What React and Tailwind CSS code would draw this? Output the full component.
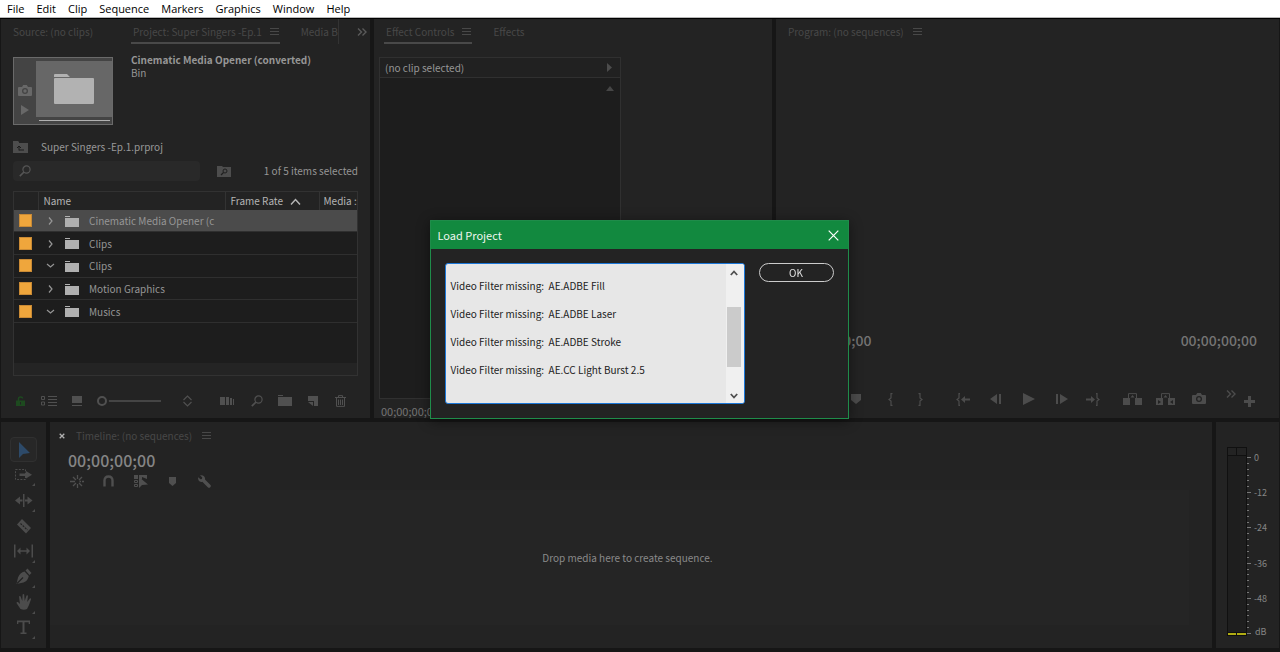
import React from "react";

function Svg({ w, h, children, className = "" }) {
  return (
    <svg width={w} height={h} viewBox={`0 0 ${w} ${h}`} fill="currentColor" aria-hidden="true" className={`block shrink-0 ${className}`}>
      {children}
    </svg>
  );
}

const line = { fill: "none", stroke: "currentColor" };

const MenuLines = () => (
  <Svg w={9} h={8}>
    <path d="M0 0h9v1H0zM0 3h9v1H0zM0 6h9v1H0z" />
  </Svg>
);

const DoubleChevron = () => (
  <Svg w={11} h={8}>
    <path d="M1 .5 4.5 4 1 7.5M5.5.5 9 4 5.500 7.5" {...line} strokeWidth="1.4" />
  </Svg>
);

const Camera = ({ hole = "#232323" }) => (
  <Svg w={14} h={12}>
    <path d="M1 2h3l1.200-2h3.600L10 2h3q1 0 1 1v7q0 1-1 1H1q-1 0-1-1V3q0-1 1-1z" />
    <circle cx="7" cy="6" r="3" fill={hole} />
    <circle cx="7" cy="6" r="1.700" />
  </Svg>
);

const Folder = () => (
  <Svg w={14} h={11}>
    <path d="M0 0h5v1H0zM0 2h14v9H0z" />
  </Svg>
);

const FolderUp = () => (
  <Svg w={15} h={12}>
    <path d="M0 0h5l1 1v1H0zM0 2h15v10H0z" />
    <path d="M6 9.500V5.500M4 7l2-2 2 2M6 9h5" fill="none" stroke="#1c1c1c" />
  </Svg>
);

const FolderSearch = () => (
  <Svg w={14} h={11}>
    <path d="M0 0h5l1 1h8v10H0z" />
    <circle cx="8" cy="5" r="2" fill="none" stroke="#1f1f1f" />
    <path d="M6.500 6.500 4 9" stroke="#1f1f1f" strokeWidth="1.200" />
  </Svg>
);

const Magnifier = () => (
  <Svg w={12} h={12}>
    <circle cx="7.500" cy="4.500" r="3.600" {...line} strokeWidth="1.200" />
    <path d="M5 7 .8 11.200" {...line} strokeWidth="1.700" />
  </Svg>
);

const Caret = ({ open }) => (
  <Svg w={9} h={8}>
    <path d={open ? "M1 2 4.500 5 8 2" : "M3 .5 6 4 3 7.500"} {...line} strokeWidth="1.200" />
  </Svg>
);

const SmallCorner = () => (
  <Svg w={3} h={3} className="absolute bottom-px right-[2px]">
    <path d="M3 0v3H0z" />
  </Svg>
);

function Tab({ label, active }) {
  return (
    <div className={`flex h-[25px] items-center gap-2 border-b-2 pl-[2px] pr-px pt-[3px] ${active ? "border-[#494949]" : "border-transparent"}`}>
      <button type="button" className="whitespace-nowrap">{label}</button>
      {active && (
        <button type="button" aria-label={`${label} panel menu`}>
          <MenuLines />
        </button>
      )}
    </div>
  );
}

const menus = ["File", "Edit", "Clip", "Sequence", "Markers", "Graphics", "Window", "Help"];

const bins = [
  { name: "Cinematic Media Opener (c", open: false, selected: true },
  { name: "Clips", open: false },
  { name: "Clips", open: true },
  { name: "Motion Graphics", open: false },
  { name: "Musics", open: true },
];

function IconButton({ label, className = "", children }) {
  return (
    <button type="button" aria-label={label} className={`flex shrink-0 items-center justify-center ${className}`}>
      {children}
    </button>
  );
}

function ProjectPanel() {
  return (
    <section className="flex min-w-0 flex-col bg-[#232323] px-3">
      <div className="flex text-[#484848]">
        <div className="-ml-[2px] mr-[37px]"><Tab label="Source: (no clips)" /></div>
        <Tab label="Project: Super Singers -Ep.1" active />
        <div className="ml-[19px] w-10 overflow-hidden border-r border-[#333333]"><Tab label="Media B" /></div>
        <IconButton label="More panels" className="-mr-[10px] ml-auto text-[#5a5a5a]"><DoubleChevron /></IconButton>
      </div>

      <div className="mt-[13px] flex gap-[18px]">
        <div className="flex h-[68px] w-[100px] border border-[#6a6a6a] bg-[#444444]">
          <div className="flex w-[22px] flex-col items-center justify-end gap-2 pb-[9px] text-[#686868]">
            <Camera hole="#444444" />
            <Svg w={10} h={10}><path d="M1 0v10l8-5z" /></Svg>
          </div>
          <div className="flex flex-1 flex-col pt-[3px]">
            <div className="flex h-14 items-center justify-center bg-[#676767] text-[#b2b2b2]">
              <Svg w={40} h={30}>
                <path d="M0 3V1q0-1 1-1h12l3 3zM1 4h38q1 0 1 1v24q0 1-1 1H1q-1 0-1-1V5q0-1 1-1z" />
              </Svg>
            </div>
            <div className="ml-[3px] mr-[2px] mt-[3px] h-px bg-[#b0b0b0]" />
          </div>
        </div>
        <div className="-mt-1 leading-[13px] text-[#969696]">
          <h2 className="font-bold">Cinematic Media Opener (converted)</h2>
          <p>Bin</p>
        </div>
      </div>

      <div className="mt-3 flex h-5 items-center gap-[13px] text-[#999999]">
        <span className="text-[#4d4d4d]"><FolderUp /></span>
        <span>Super Singers -Ep.1.prproj</span>
      </div>

      <div className="mt-1 flex h-5 items-center">
        <label className="flex h-5 w-[187px] items-center rounded-sm bg-[#292929] pl-[6px] text-[#555555]">
          <Magnifier />
          <input type="text" aria-label="Search project" className="ml-1 min-w-0 flex-1 bg-transparent outline-none" />
        </label>
        <IconButton label="Create search bin" className="ml-[17px] text-[#4d4d4d]"><FolderSearch /></IconButton>
        <span className="ml-auto whitespace-nowrap text-[#969696]">1 of 5 items selected</span>
      </div>

      <div className="mt-[10px] flex flex-1 flex-col border border-[#323232] bg-[#1d1d1d]">
        <table className="h-[131px] w-full table-fixed border-collapse text-left text-[#969696]">
          <colgroup>
            <col className="w-6" />
            <col />
            <col className="w-[94px]" />
            <col className="w-[38px]" />
          </colgroup>
          <thead>
            <tr className="h-[18px] bg-[#232323] text-[#b4b4b4]">
              <th aria-label="Label" className="p-0" />
              <th className="border-l border-[#333333] p-0 pl-[5px] font-normal">Name</th>
              <th className="border-l border-[#333333] p-0 pl-[5px] font-normal">
                <span className="flex items-center gap-[7px] whitespace-nowrap">
                  Frame Rate
                  <Svg w={11} h={7}><path d="M1 6.500 5.500 1.500 10 6.500" {...line} strokeWidth="1.500" /></Svg>
                </span>
              </th>
              <th className="overflow-hidden whitespace-nowrap border-l border-[#333333] p-0 pl-1 font-normal">Media :</th>
            </tr>
          </thead>
          <tbody>
            {bins.map((b, i) => (
              <tr key={i} className={`border-b border-[#2f2f2f] ${b.selected ? "bg-[#4b4b4b]" : ""}`}>
                <td className="p-0 pl-[5px]">
                  <span className="block h-[13px] w-[13px] border border-[#c98a35] bg-[#efa63c]" />
                </td>
                <td colSpan={3} className="p-0 pl-2">
                  <span className="flex items-center pt-px">
                    <IconButton label={b.open ? "Collapse bin" : "Expand bin"}><Caret open={b.open} /></IconButton>
                    <span className="ml-[10px] text-[#b0b0b0]"><Folder /></span>
                    <span className="ml-[10px]">{b.name}</span>
                  </span>
                </td>
              </tr>
            ))}
          </tbody>
        </table>
        <div className="mt-auto h-3 bg-[#242424]" />
      </div>

      <div className="flex h-[42px] items-center pb-px pt-[8px] text-[#505050]">
        <IconButton label="Project writable" className="ml-[3px] text-[#1d4a1f]">
          <Svg w={10} h={10}>
            <path d="M0 4.500h9V10H0z" />
            <path d="M2.500 5V3q0-2 2-2t2.200 1.500" {...line} strokeWidth="1.400" />
            <path d="M4 6h1v2.500H4z" fill="#232323" />
          </Svg>
        </IconButton>
        <IconButton label="List view" className="ml-[15px]">
          <Svg w={16} h={11}>
            <path d="M.5 1.500h3v3h-3zM.5 7h3v3h-3z" {...line} />
            <path d="M7 1h9v1H7zM7 4h9v1H7zM7 7h9v1H7zM7 10h9v1H7z" />
          </Svg>
        </IconButton>
        <IconButton label="Icon view" className="ml-[15px]">
          <Svg w={10} h={10}><path d="M0 0h10v7H0zM0 9h10v1H0z" /></Svg>
        </IconButton>
        <input
          type="range"
          aria-label="Icon size"
          defaultValue="0"
          className="ml-[15px] h-3 w-16 appearance-none bg-transparent [&::-webkit-slider-runnable-track]:h-[2px] [&::-webkit-slider-runnable-track]:bg-[#454545] [&::-webkit-slider-thumb]:-mt-1 [&::-webkit-slider-thumb]:h-[10px] [&::-webkit-slider-thumb]:w-[10px] [&::-webkit-slider-thumb]:appearance-none [&::-webkit-slider-thumb]:rounded-full [&::-webkit-slider-thumb]:border-2 [&::-webkit-slider-thumb]:border-[#505050] [&::-webkit-slider-thumb]:bg-[#232323] [&::-webkit-slider-thumb]:shadow-[0_0_0_2px_#232323]"
        />
        <IconButton label="Sort icons" className="ml-[22px]">
          <Svg w={9} h={12}><path d="M.5 5 4.500 1l4 4M.5 7l4 4 4-4" {...line} strokeWidth="1.200" /></Svg>
        </IconButton>
        <IconButton label="Automate to sequence" className="ml-auto">
          <Svg w={15} h={8}><path d="M0 0h5v8H0zM6 0h3v8H6zM10 1h2v7h-2zM13 2h1v6h-1z" /></Svg>
        </IconButton>
        <IconButton label="Find" className="ml-4"><Magnifier /></IconButton>
        <IconButton label="New bin" className="ml-[15px]"><Folder /></IconButton>
        <IconButton label="New item" className="ml-4">
          <Svg w={10} h={10}><path d="M0 0h10v10H6V5H0zM0 6l5 4V6z" /></Svg>
        </IconButton>
        <IconButton label="Clear" className="ml-[17px] mr-3">
          <Svg w={11} h={12}>
            <path d="M0 2.500h11M3.500 2V.6h4V2M1.500 3v8.400h8V3M3.500 4.500V10M5.500 4.500V10M7.500 4.500V10" {...line} />
          </Svg>
        </IconButton>
      </div>
    </section>
  );
}

function EffectsPanel() {
  return (
    <section className="flex min-w-0 flex-col bg-[#232323] pl-[5px]">
      <div className="flex gap-[19px] pl-[5px] text-[#484848]">
        <Tab label="Effect Controls" active />
        <Tab label="Effects" />
      </div>
      <div className="mt-[13px] flex w-[242px] flex-1 flex-col border border-[#303030] bg-[#1d1d1d]">
        <div className="flex h-5 items-center justify-between border-b border-[#303030] bg-[#212121] pl-[5px] pr-2 text-[#969696]">
          <span>(no clip selected)</span>
          <Svg w={5} h={9} className="text-[#4c4c4c]"><path d="M0 0v9l5-4.500z" /></Svg>
        </div>
        <IconButton label="Scroll up" className="mr-[6px] mt-2 self-end text-[#464646]">
          <Svg w={8} h={5}><path d="M0 5h8L4 0z" /></Svg>
        </IconButton>
      </div>
      <div className="flex h-[19px] items-center pl-[2px] pt-1 text-[11px] text-[#747474]">00;00;00;00</div>
    </section>
  );
}

const Monitor = ({ arrows }) => (
  <Svg w={19} h={12}>
    <path d="M0 5h7v7H0zM12 5h7v7h-7z" />
    <path d="M5.500 5V.6h8V5" {...line} />
    <path d="M7.500 4.500 9.500 2l2 2.500z" />
    {arrows && <path d="M2 7v4l3-2zM17 7v4l-3-2z" fill="#232323" />}
  </Svg>
);

const Brace = ({ flip }) => (
  <Svg w={5} h={13}>
    <path d={flip ? "M.5.6h1.500v4.400L4 6.500 2 8v4.400H.5" : "M4.500.6H3v4.400L1 6.500 3 8v4.400h1.500"} {...line} strokeWidth="1.200" />
  </Svg>
);

function ProgramPanel() {
  const codes = "text-sm font-medium leading-4 text-[#747474]";
  return (
    <section className="flex min-w-0 flex-col justify-between bg-[#232323]">
      <div className="flex pl-[10px] text-[#484848]">
        <Tab label="Program: (no sequences)" />
        <button type="button" aria-label="Program panel menu" className="ml-2 pt-px"><MenuLines /></button>
      </div>
      <div>
        <div className="flex justify-between pl-[19px] pr-[22px]">
          <span className={codes}>00;00;00;00</span>
          <span className={codes}>00;00;00;00</span>
        </div>
        <div className="mb-1 mt-9 flex h-[30px] items-center justify-end pr-[22px] text-[#4c4c4c]">
          <IconButton label="Add marker" className="mr-1 w-[30px]">
            <Svg w={10} h={10}><path d="M0 0h10v6L5 10 0 6z" /></Svg>
          </IconButton>
          <IconButton label="Mark in" className="w-[30px]"><Brace /></IconButton>
          <IconButton label="Mark out" className="mr-[11px] w-[30px]"><Brace flip /></IconButton>
          <IconButton label="Go to in" className="w-[33px]">
            <Svg w={14} h={13}>
              <path d="M4 .6H3v4.400L1 6.500 3 8v4.400h1" {...line} strokeWidth="1.200" />
              <path d="M5 6.500 9 3v2.500h5v2H9V10z" />
            </Svg>
          </IconButton>
          <IconButton label="Step back" className="w-[33px]">
            <Svg w={12} h={10}><path d="M7 0v10L0 5zM9 0h2v10H9z" /></Svg>
          </IconButton>
          <IconButton label="Play" className="w-[33px]">
            <Svg w={12} h={12}><path d="M0 0v12l12-6z" /></Svg>
          </IconButton>
          <IconButton label="Step forward" className="w-[33px]">
            <Svg w={12} h={10}><path d="M0 0h2v10H0zM4 0v10l8-5z" /></Svg>
          </IconButton>
          <IconButton label="Go to out" className="mr-[5px] w-[33px] pr-1">
            <Svg w={14} h={13}>
              <path d="M10 .6h1v4.400l2 1.500L11 8v4.400h-1" {...line} strokeWidth="1.200" />
              <path d="M9 6.500 5 3v2.500H0v2h5V10z" />
            </Svg>
          </IconButton>
          <IconButton label="Lift" className="w-[33px]"><Monitor /></IconButton>
          <IconButton label="Extract" className="w-[33px]"><Monitor arrows /></IconButton>
          <IconButton label="Export frame" className="w-[33px]"><Camera /></IconButton>
          <IconButton label="More buttons" className="ml-2 w-4 pb-[10px]"><DoubleChevron /></IconButton>
          <IconButton label="Button editor" className="ml-[2px] w-4 pt-1">
            <Svg w={11} h={11}><path d="M4 0h3v4h4v3H7v4H4V7H0V4h4z" /></Svg>
          </IconButton>
        </div>
      </div>
    </section>
  );
}

const tools = [
  { name: "Selection tool", art: <path d="M5 2v16l4-4 7-1z" />, selected: true },
  {
    name: "Track select forward tool",
    sub: true,
    art: (
      <>
        <path d="M1.500 4.500h10v10h-10z" {...line} strokeDasharray="2 1.300" />
        <path d="M5.500 8.500H12V6l6 3.800-6 3.700V11H5.500z" />
      </>
    ),
  },
  { name: "Ripple edit tool", sub: true, art: <path d="M9 4h1.500v13H9zM1 10.500 6 6.500v3h2.500v2H6v3zM18.500 10.500l-5-4v3H11v2h2.500v3z" /> },
  {
    name: "Razor tool",
    art: (
      <>
        <path d="M8 3 17 12l-5 5.500L3 8.500z" />
        <path d="M6.500 7.500 13.500 14" stroke="#232323" strokeWidth="1.200" strokeDasharray="2 1" />
      </>
    ),
  },
  { name: "Slip tool", sub: true, art: <path d="M0 3.500h1.500v13H0zM17.500 3.500H19v13h-1.500zM3 10l3.500-3.500v2.800h6V6.500L16 10l-3.500 3.500v-2.800h-6v2.800z" /> },
  {
    name: "Pen tool",
    sub: true,
    art: (
      <>
        <path d="M11.500 3.500 13.500 1.500 17.500 6 15.500 8zM10.500 4.500 14.800 9q-1 5-5.300 6.500L2.500 17 4 10.500q2-5 6.500-6z" />
        <path d="M3 16.500 9 10.500" stroke="#232323" strokeWidth="1.200" />
      </>
    ),
  },
  {
    name: "Hand tool",
    sub: true,
    art: (
      <path d="M6.500 17 2.500 11q0-1.200 1.400-1L6 12 5 4.500q.8-1.200 1.600 0L8.300 9 8.600 2.500q.8-1 1.600 0L10.700 9l1.800-5.500q1-.8 1.500.3L13.200 10l2.600-3.500q1-.5 1.300.5L15 13l-2 4q-3 1.500-6.500 0z" />
    ),
  },
  { name: "Type tool", sub: true, art: <path d="M3 3.500h13V7h-1.300V5.300h-4.200v10.200h2V17H6.500v-1.500h2V5.300H4.300V7H3z" /> },
];

function Tools() {
  return (
    <nav aria-label="Tools" className="flex flex-col items-center justify-between bg-[#232323] pb-2 pt-[15px] text-[#4c4c4c]">
      {tools.map((t) => (
        <IconButton
          key={t.name}
          label={t.name}
          className={`relative h-[25px] w-[27px] ${t.selected ? "rounded-sm border border-[#303030] bg-[#272727] text-[#2d4a69]" : ""}`}
        >
          <Svg w={20} h={20}>{t.art}</Svg>
          {t.sub && <SmallCorner />}
        </IconButton>
      ))}
    </nav>
  );
}

function Timeline() {
  return (
    <section className="flex min-w-0 flex-col bg-[#232323]">
      <div className="flex h-[26px] items-center pl-[9px] pt-[2px] text-[#484848]">
        <IconButton label="Close timeline" className="text-[#b0b0b0]">
          <Svg w={6} h={6}><path d="m.7.7 4.600 4.600M5.300.7.7 5.300" {...line} strokeWidth="1.300" /></Svg>
        </IconButton>
        <span className="ml-[11px]">Timeline: (no sequences)</span>
        <IconButton label="Timeline panel menu" className="ml-[10px]"><MenuLines /></IconButton>
      </div>
      <div className="flex h-6 items-center pl-[18px] text-base font-medium text-[#858585]">00;00;00;00</div>
      <div className="flex h-[18px] items-center pl-5 text-[#4f4f4f]">
        <IconButton label="Insert as nests">
          <Svg w={14} h={13}>
            <path d="M7.500 0v4M7.500 9v4M0 6.500h5M9.500 6.500h1.500M12 6.500h2M3 2l3 3M3 11l3-3M12 2 9 5M9 8l3 3" {...line} strokeWidth="1.300" />
          </Svg>
        </IconButton>
        <IconButton label="Snap" className="ml-[19px]">
          <Svg w={11} h={12}><path d="M1.500 11.500V5.500q0-4 4-4t4 4V11.500" {...line} strokeWidth="2.400" /></Svg>
        </IconButton>
        <IconButton label="Linked selection" className="ml-5">
          <Svg w={14} h={13}>
            <path d="M0 0h4v4H0zM5 0h8v4L8 2v2H5z" />
            <path d="M.5 5.500h3v2h-3zM.5 9.500h3v2h-3z" {...line} />
            <path d="M5 2v11l3-3 6-.5z" />
          </Svg>
        </IconButton>
        <IconButton label="Add marker" className="ml-[21px]">
          <Svg w={7} h={9}><path d="M0 0h7v6L3.500 9 0 6z" /></Svg>
        </IconButton>
        <IconButton label="Timeline settings" className="ml-[22px]">
          <Svg w={13} h={13}>
            <path d="M2 .3 4.300 2.600 3.800 4 2.500 4.300.2 2.200q-.6 3 1.500 4.300 1.300.7 2.600.2L10 12.500q1.300.8 2.300-.3t.2-2.200L7 4.600q.4-2-1-3.400T2 .3z" />
          </Svg>
        </IconButton>
      </div>
      <div className="mr-[23px] flex flex-1 items-center justify-center bg-[#252525] pl-4 text-[#8a8a8a]">
        Drop media here to create sequence.
      </div>
      <div className="h-[23px]" />
    </section>
  );
}

const ticks = Array.from({ length: 31 }, (_, i) => i);
const levels = ["0", "-12", "-24", "-36", "-48", "dB"];

function Meter() {
  return (
    <section aria-label="Audio meters" className="bg-[#232323] pl-[11px] pt-[25px]">
      <svg width="48" height="192" viewBox="0 0 48 192" className="block">
        <path d="M0 0h20v189H0z" fill="#101010" />
        <path d="M1 1h8v7H1zM10 1h9v7h-9z" fill="#232323" />
        <path d="M1 9h18v176H1z" fill="#1e1e1e" />
        <path d="M1 186h8v2H1zM10 186h9v2h-9z" fill="#b0ac13" />
        {ticks.map((i) => (
          <path key={i} d={`M20 ${Math.round(10 + i * 5.87)}h${i % 6 === 0 ? 4 : 2}v1h-${i % 6 === 0 ? 4 : 2}z`} fill="#777777" />
        ))}
        {levels.map((t, i) => (
          <text key={t} x={t === "dB" ? 28 : 27} y={i === 5 ? 188 : Math.round(14 + i * 35.2)} fontSize="9" fill="#858585">{t}</text>
        ))}
      </svg>
    </section>
  );
}

const messages = ["Fill", "Laser", "Stroke"]
  .map((n) => `Video Filter missing:  AE.ADBE ${n}`)
  .concat("Video Filter missing:  AE.CC Light Burst 2.5")
  .join("\n");

function LoadProjectDialog() {
  return (
    <div className="fixed inset-0 flex items-center justify-center pb-[13px] pr-[2px]">
      <div role="dialog" aria-modal="true" aria-labelledby="dlg" className="w-[419px] border border-[#1f8c4a] bg-[#232323] shadow-[0_2px_12px_rgba(0,0,0,0.45)]">
        <div className="flex h-7 items-center justify-between bg-[#12893f] pl-[7px] pr-[9px]">
          <h1 id="dlg" className="text-[11px] text-[#eef6f0]">Load Project</h1>
          <IconButton label="Close" className="text-white">
            <Svg w={11} h={11}><path d="m.7.7 9.600 9.600M10.300.7.7 10.300" {...line} strokeWidth="1.200" /></Svg>
          </IconButton>
        </div>
        <div className="flex items-start gap-[14px] px-[14px] pb-[14px] pt-[14px]">
          <div className="flex h-[141px] w-[300px] overflow-hidden rounded-[3px] border border-[#1b77d8] bg-[#e7e7e7]">
            <textarea
              readOnly
              aria-label="Load messages"
              value={messages}
              className="block min-w-0 flex-1 resize-none overflow-hidden bg-transparent pl-[5px] pt-2 leading-7 text-[#222222] outline-none"
            />
            <div className="flex w-[18px] flex-col items-center bg-[#f0f0f0] pb-1 pr-[2px] pt-[6px] text-[#505050]">
              <IconButton label="Scroll up"><Svg w={8} h={6}><path d="M.8 5 4 1.500 7.200 5" {...line} strokeWidth="1.800" /></Svg></IconButton>
              <div className="mt-[31px] h-[60px] w-[14px] bg-[#cbcbcb]" />
              <IconButton label="Scroll down" className="mt-auto"><Svg w={8} h={6}><path d="M.8 1 4 4.500 7.200 1" {...line} strokeWidth="1.800" /></Svg></IconButton>
            </div>
          </div>
          <button type="button" className="h-[19px] w-[75px] rounded-full border border-[#cccccc] leading-none text-[#e0e0e0]">OK</button>
        </div>
      </div>
    </div>
  );
}

export default function App() {
  return (
    <div className="flex min-h-screen flex-col bg-[#161616] font-['Noto_Sans_CJK_SC','Noto_Sans',sans-serif] text-[10px] leading-4">
      <header className="border-b border-black bg-white">
        <nav aria-label="Main menu" className="flex h-[18px] items-center gap-3 border-b border-[#b8b8b8] pl-[7px] font-['Open_Sans','Noto_Sans',sans-serif] text-[11px] text-black">
          {menus.map((m) => (
            <button key={m} type="button">{m}</button>
          ))}
        </nav>
      </header>
      <main className="grid flex-1 grid-rows-[399fr_226fr] gap-1 px-px pb-1">
        <div className="grid grid-cols-[369fr_398fr_503fr] gap-1">
          <ProjectPanel />
          <EffectsPanel />
          <ProgramPanel />
        </div>
        <div className="grid grid-cols-[45px_1fr_63px] gap-1">
          <Tools />
          <Timeline />
          <Meter />
        </div>
      </main>
      <LoadProjectDialog />
    </div>
  );
}
